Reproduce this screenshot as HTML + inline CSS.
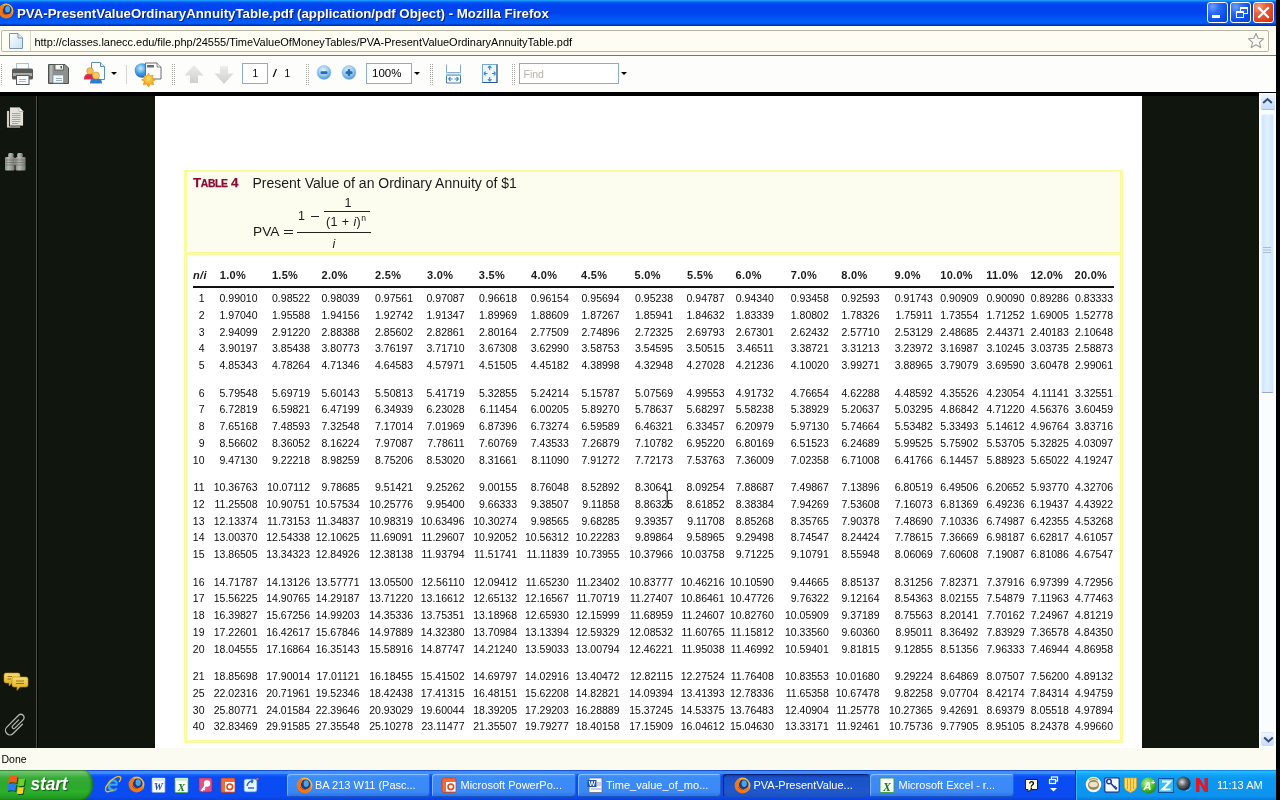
<!DOCTYPE html>
<html><head><meta charset="utf-8">
<style>
*{box-sizing:border-box}
html,body{margin:0;padding:0}
body{width:1280px;height:800px;position:relative;overflow:hidden;background:#10150d;font-family:"Liberation Sans",sans-serif}
.a{position:absolute}
#titlebar{left:0;top:0;width:1280px;height:26px;background:linear-gradient(#22a4fa 0px,#1888f8 1px,#0056f0 2.5px,#0044f0 5px,#0042ee 13px,#0052f4 17px,#005ef8 23px,#0050e8 24px,#0030b0 25px,#0030b0 26px)}
#title{left:17px;top:5.5px;font-size:13.25px;font-weight:bold;color:#fff;white-space:nowrap;text-shadow:1px 1px 0 #0a1e70;line-height:16px}
#addr{left:0;top:26px;width:1280px;height:30px;background:#fdfcf1;border-bottom:1px solid #77756a}
#field{left:1px;top:30px;width:1268px;height:22px;border:1px solid #b9b6a6;border-radius:2px;background:#fefdf4}
#url{left:34.5px;top:35px;font-size:11px;letter-spacing:-0.025px;color:#000;white-space:nowrap;line-height:14px}
#toolbar{left:0;top:56px;width:1280px;height:36px;background:#fdfdfb}
#blk{left:0;top:92px;width:1280px;height:4px;background:#000}
#side-line{left:36px;top:96px;width:1px;height:652px;background:#484c42;box-shadow:1px 0 0 #000}
#page{left:155px;top:96px;width:987px;height:652px;background:#fff}
#rborder{left:1276px;top:0;width:4px;height:800px;background:#000;z-index:5}
#sbar{left:1259px;top:93px;width:17px;height:655px;background:#fbfcfe}
#status{left:0;top:748px;width:1276px;height:22px;background:#fcfbf1}
#done{left:1.5px;top:753px;font-size:10.5px;color:#000;line-height:13px}
#taskbar{left:0;top:769px;width:1280px;height:31px;background:linear-gradient(#3168d5 0px,#4993e6 1px,#2157d7 3px,#2663e0 6px,#2663e0 26px,#1941a5 31px)}
#tbox{left:184px;top:170px;width:939px;height:573px;border:3px solid #f9fb9e;border-top-width:2px;background:#fff}
#thead{left:187px;top:172px;width:933px;height:83px;background:#fdfdef;border-bottom:3px solid #f9fb9e}
.c{position:absolute;width:100px;text-align:right;font-weight:normal;font-size:10.5px;line-height:10px;color:#0a0a0a;white-space:nowrap}
.h{position:absolute;top:270px;font-weight:bold;font-size:11px;letter-spacing:0.3px;line-height:10px;color:#1a1a1a;white-space:nowrap}
.winbtn{position:absolute;width:21px;height:21px;border:1px solid #fff;border-radius:3px;background:radial-gradient(circle at 25% 20%,#6fa0ff 0,#2d6cf8 30%,#0a4ee8 70%,#0840c8 100%)}
.winbtn.close{background:radial-gradient(circle at 25% 20%,#f0a080 0,#e8603a 35%,#d8401a 75%,#c03010 100%)}
.grip{position:absolute;width:4px;background-image:radial-gradient(circle,#a4a4a0 0.7px,transparent 0.9px);background-size:2px 2px}
.grip1{position:absolute;width:2px;background-image:radial-gradient(circle,#a4a4a0 0.7px,transparent 0.9px);background-size:2px 2px}
.tri{position:absolute;width:0;height:0;border-left:3px solid transparent;border-right:3px solid transparent;border-top:3px solid #000}
.tbtxt{position:absolute;font-size:11px;line-height:12px;color:#000;white-space:nowrap}
.task{position:absolute;top:774px;height:22.5px;border-radius:3px;background:linear-gradient(#48a0ff 0px,#3c8cf8 3px,#3a88f6 18px,#2a74ea 22px);box-shadow:inset 1px 1px 0 rgba(255,255,255,0.35),inset -1px -1px 0 rgba(0,30,120,0.35)}
.task.active{background:linear-gradient(#0a3cb0,#1a52c8 4px,#1e58cc 18px,#1a50c0);box-shadow:inset 1px 1px 1px rgba(0,0,60,0.6)}
.ttxt{position:absolute;top:779px;font-size:11px;line-height:12px;color:#fff;white-space:nowrap}
#rule{left:193px;top:286px;width:921px;height:1.5px;background:#111}
</style></head><body><div id="root" style="position:absolute;left:0;top:0;width:1280px;height:800px;will-change:transform">
<div id="titlebar" class="a"></div>
<div id="title" class="a">PVA-PresentValueOrdinaryAnnuityTable.pdf (application/pdf Object) - Mozilla Firefox</div>
<div id="addr" class="a"></div>
<div id="field" class="a"></div>
<div id="url" class="a">http://classes.lanecc.edu/file.php/24555/TimeValueOfMoneyTables/PVA-PresentValueOrdinaryAnnuityTable.pdf</div>
<div id="toolbar" class="a"></div>
<div id="blk" class="a"></div>
<div id="side-line" class="a"></div>
<div id="page" class="a"></div>
<div id="sbar" class="a"></div>
<div id="rborder" class="a"></div>
<div id="status" class="a"></div>
<div id="done" class="a">Done</div>

<!-- title bar icons -->
<svg class="a" style="left:-2.5px;top:2.5px" width="16" height="16" viewBox="0 0 17 17"><defs><radialGradient id="fo-2" cx="0.25" cy="0.75" r="0.9"><stop offset="0" stop-color="#d84010"/><stop offset="0.55" stop-color="#f4861a"/><stop offset="1" stop-color="#ffd040"/></radialGradient></defs><circle cx="8.5" cy="8.5" r="7.9" fill="url(#fo-2)"/><circle cx="9.6" cy="7.4" r="4.9" fill="#1c3c88"/><ellipse cx="10.2" cy="6.6" rx="2.6" ry="3.4" fill="#4aa4e8"/><path d="M1.2 7 Q2 2.5 6 1.5 Q5 3.5 6.3 5 Q4.2 6.5 5.2 9.5 Q6.5 12.5 10.5 12.3 Q13.5 12 15.6 9.5 Q15 14 10.5 15.6 Q6 16.6 3 13.8 Q0.8 11 1.2 7Z" fill="#f07818"/><path d="M4 10 Q6 13 10 12.6" stroke="#a83808" stroke-width="0.7" fill="none"/></svg>
<div class="a winbtn" style="left:1207px;top:2px"><div style="position:absolute;left:4px;top:12px;width:8px;height:3px;background:#fff"></div></div>
<div class="a winbtn" style="left:1230px;top:2px">
  <div style="position:absolute;left:9px;top:4px;width:8px;height:7px;border:1px solid #fff;border-top-width:2px"></div>
  <div style="position:absolute;left:5px;top:8px;width:8px;height:7px;border:1px solid #fff;border-top-width:2px;background:#1a5cf0"></div>
</div>
<div class="a winbtn close" style="left:1253px;top:2px">
  <svg width="19" height="19" style="position:absolute;left:0;top:0"><path d="M5 5 L14 14 M14 5 L5 14" stroke="#fff" stroke-width="2.2" stroke-linecap="square"/></svg>
</div>
<!-- address bar -->
<svg class="a" style="left:9px;top:33px" width="14" height="16" viewBox="0 0 14 16">
  <defs><linearGradient id="pgg" x1="0" y1="0" x2="1" y2="1"><stop offset="0" stop-color="#ffffff"/><stop offset="1" stop-color="#c6e2f6"/></linearGradient></defs>
  <path d="M0.5 0.5 H9 L13.5 5 V15.5 H0.5Z" fill="url(#pgg)" stroke="#7b94b8"/>
  <path d="M9 0.5 V5 H13.5" fill="#dde8f4" stroke="#7b94b8"/>
</svg>
<div class="a" style="left:30px;top:31px;width:1px;height:20px;background:#d8d4c4"></div>
<svg class="a" style="left:1247px;top:32px" width="18" height="18" viewBox="0 0 18 18">
  <path d="M9 1.5 L11.2 6.3 L16.5 6.8 L12.5 10.3 L13.7 15.6 L9 12.8 L4.3 15.6 L5.5 10.3 L1.5 6.8 L6.8 6.3Z" fill="#fbfbf7" stroke="#9c9a92" stroke-width="1.1" stroke-linejoin="round"/>
</svg>
<!-- toolbar -->
<svg class="a" style="left:1px;top:64px" width="2" height="22" fill="#a8a8a4"><rect x="0" y="0" width="1" height="1"/><rect x="0" y="2" width="1" height="1"/><rect x="0" y="4" width="1" height="1"/><rect x="0" y="6" width="1" height="1"/><rect x="0" y="8" width="1" height="1"/><rect x="0" y="10" width="1" height="1"/><rect x="0" y="12" width="1" height="1"/><rect x="0" y="14" width="1" height="1"/><rect x="0" y="16" width="1" height="1"/><rect x="0" y="18" width="1" height="1"/><rect x="0" y="20" width="1" height="1"/></svg>
<svg class="a" style="left:11px;top:62px" width="23" height="24" viewBox="0 0 23 24">
  <rect x="5.5" y="1.5" width="12" height="7" fill="#fbfdff" stroke="#a8c4d8"/>
  <rect x="1" y="6.5" width="21" height="11" rx="1.5" fill="#5a5c5a"/>
  <rect x="2" y="11" width="19" height="3" fill="#a9aba8"/>
  <rect x="5.5" y="13.5" width="12.5" height="9" fill="#fdfeff" stroke="#555a5e"/>
  <path d="M8 17.5 H15 M8 19.5 H15" stroke="#8aa0c0" stroke-width="0.8"/>
</svg>
<svg class="a" style="left:47px;top:63px" width="23" height="22" viewBox="0 0 23 22">
  <path d="M1.5 1.5 H18 L21.5 5 V20.5 H1.5Z" fill="#8e908c" stroke="#4e504e"/>
  <rect x="3" y="2" width="2.5" height="17" fill="#b4b6b2"/>
  <rect x="8" y="1.5" width="8.5" height="5.5" fill="#f4f4f2" stroke="#4e504e" stroke-width="0.8"/>
  <rect x="13.5" y="3" width="1.5" height="2.5" fill="#555"/>
  <rect x="6" y="12" width="10.5" height="8" fill="#f2f8fc" stroke="#7090b0" stroke-width="0.7"/>
  <path d="M9 15.5 H15 M9 17.5 H15" stroke="#7a8fa8" stroke-width="0.7"/>
</svg>
<svg class="a" style="left:83px;top:62px" width="24" height="23" viewBox="0 0 24 23">
  <path d="M8.5 0.5 H17.5 L21.5 4.5 V17.5 H8.5Z" fill="#ffffff" stroke="#5a8cc0"/>
  <path d="M17.5 0.5 V4.5 H21.5" fill="#e4eef8" stroke="#5a8cc0"/>
  <path d="M1 17.5 Q1 12 5 12 H8 Q11 12 11 17.5Z" fill="#d82850"/>
  <circle cx="7" cy="9" r="3.3" fill="#f2c050" stroke="#c88a30" stroke-width="0.6"/>
  <path d="M7 21.5 Q7 16.5 11 16.5 H15 Q19 16.5 19 21.5Z" fill="#2b7ed0"/>
  <circle cx="13" cy="13.5" r="3.5" fill="#f6cc60" stroke="#c88a30" stroke-width="0.6"/>
</svg>
<div class="a tri" style="left:110.5px;top:72px"></div>
<div class="a" style="left:126px;top:65px;width:1px;height:19px;background:#d4d4d0"></div>
<svg class="a" style="left:134px;top:62px" width="28" height="25" viewBox="0 0 28 25">
  <defs><radialGradient id="glb" cx="0.4" cy="0.35" r="0.7"><stop offset="0" stop-color="#c8ecff"/><stop offset="0.5" stop-color="#4aa0e8"/><stop offset="1" stop-color="#1a58b0"/></radialGradient>
  <radialGradient id="sun" cx="0.5" cy="0.4" r="0.6"><stop offset="0" stop-color="#ffe060"/><stop offset="1" stop-color="#f09000"/></radialGradient></defs>
  <circle cx="8" cy="8.5" r="7.3" fill="url(#glb)"/>
  <path d="M11.5 1 H23 L27 5 V17 H11.5Z" fill="#fff" stroke="#6a6c6a"/>
  <path d="M23 1 V5 H27" fill="#eee" stroke="#6a6c6a" stroke-width="0.8"/>
  <rect x="13" y="3" width="7" height="2.5" fill="#6a6c6a"/>
  <path d="M14.5 11 L16 14 L19.2 13 L18.5 16.4 L21.5 17.8 L18.8 19.6 L19.7 22.8 L16.4 22.1 L14.5 25 L12.6 22.1 L9.3 22.8 L10.2 19.6 L7.5 17.8 L10.5 16.4 L9.8 13 L13 14Z" fill="url(#sun)" stroke="#d07000" stroke-width="0.4"/>
</svg>
<svg class="a" style="left:172px;top:64px" width="4" height="22" fill="#a8a8a4"><rect x="0" y="0" width="1" height="1"/><rect x="0" y="2" width="1" height="1"/><rect x="0" y="4" width="1" height="1"/><rect x="0" y="6" width="1" height="1"/><rect x="0" y="8" width="1" height="1"/><rect x="0" y="10" width="1" height="1"/><rect x="0" y="12" width="1" height="1"/><rect x="0" y="14" width="1" height="1"/><rect x="0" y="16" width="1" height="1"/><rect x="0" y="18" width="1" height="1"/><rect x="0" y="20" width="1" height="1"/><rect x="2" y="0" width="1" height="1"/><rect x="2" y="2" width="1" height="1"/><rect x="2" y="4" width="1" height="1"/><rect x="2" y="6" width="1" height="1"/><rect x="2" y="8" width="1" height="1"/><rect x="2" y="10" width="1" height="1"/><rect x="2" y="12" width="1" height="1"/><rect x="2" y="14" width="1" height="1"/><rect x="2" y="16" width="1" height="1"/><rect x="2" y="18" width="1" height="1"/><rect x="2" y="20" width="1" height="1"/></svg>
<svg class="a" style="left:183px;top:64px" width="22" height="20" viewBox="0 0 22 20">
  <defs><linearGradient id="arg" x1="0" y1="0" x2="0" y2="1"><stop offset="0" stop-color="#ececea"/><stop offset="1" stop-color="#cfcfcb"/></linearGradient></defs>
  <path d="M11 1 L20.5 11.5 H15 V19 H7 V11.5 H1.5Z" fill="url(#arg)"/>
</svg>
<svg class="a" style="left:213px;top:65px" width="22" height="20" viewBox="0 0 22 20">
  <path d="M7 1 H15 V8.5 H20.5 L11 19 L1.5 8.5 H7Z" fill="url(#arg)"/>
</svg>
<div class="a" style="left:242px;top:63px;width:26px;height:21px;border:1px solid #8eacc4;background:#fff"></div>
<div class="a tbtxt" style="left:252.5px;top:67.5px;font-size:10px">1</div>
<div class="a tbtxt" style="left:273px;top:67px;font-size:11px;font-style:italic;font-weight:bold">/</div>
<div class="a tbtxt" style="left:284.5px;top:67.5px;font-size:10px">1</div>
<svg class="a" style="left:306px;top:64px" width="4" height="22" fill="#a8a8a4"><rect x="0" y="0" width="1" height="1"/><rect x="0" y="2" width="1" height="1"/><rect x="0" y="4" width="1" height="1"/><rect x="0" y="6" width="1" height="1"/><rect x="0" y="8" width="1" height="1"/><rect x="0" y="10" width="1" height="1"/><rect x="0" y="12" width="1" height="1"/><rect x="0" y="14" width="1" height="1"/><rect x="0" y="16" width="1" height="1"/><rect x="0" y="18" width="1" height="1"/><rect x="0" y="20" width="1" height="1"/><rect x="2" y="0" width="1" height="1"/><rect x="2" y="2" width="1" height="1"/><rect x="2" y="4" width="1" height="1"/><rect x="2" y="6" width="1" height="1"/><rect x="2" y="8" width="1" height="1"/><rect x="2" y="10" width="1" height="1"/><rect x="2" y="12" width="1" height="1"/><rect x="2" y="14" width="1" height="1"/><rect x="2" y="16" width="1" height="1"/><rect x="2" y="18" width="1" height="1"/><rect x="2" y="20" width="1" height="1"/></svg>
<svg class="a" style="left:316px;top:65px" width="16" height="16" viewBox="0 0 16 16">
  <defs><radialGradient id="zg" cx="0.45" cy="0.35" r="0.65"><stop offset="0" stop-color="#e8f6ff"/><stop offset="0.6" stop-color="#8cc8f0"/><stop offset="1" stop-color="#4a90d0"/></radialGradient></defs>
  <circle cx="8" cy="7.5" r="7" fill="url(#zg)" stroke="#a0c8e8" stroke-width="0.6"/>
  <rect x="4.5" y="6.3" width="7" height="2.6" rx="1" fill="#2a6ab0"/>
</svg>
<svg class="a" style="left:341px;top:65px" width="16" height="16" viewBox="0 0 16 16">
  <circle cx="8" cy="7.5" r="7" fill="url(#zg)" stroke="#a0c8e8" stroke-width="0.6"/>
  <rect x="4.5" y="6.3" width="7" height="2.6" rx="1" fill="#2a6ab0"/>
  <rect x="6.7" y="4" width="2.6" height="7" rx="1" fill="#2a6ab0"/>
</svg>
<div class="a" style="left:366px;top:63px;width:46px;height:21px;border:1px solid #8eacc4;background:#fff"></div>
<div class="a tbtxt" style="left:372px;top:67px;font-size:11.5px">100%</div>
<div class="a tri" style="left:413.5px;top:72px"></div>
<svg class="a" style="left:430px;top:64px" width="4" height="22" fill="#a8a8a4"><rect x="0" y="0" width="1" height="1"/><rect x="0" y="2" width="1" height="1"/><rect x="0" y="4" width="1" height="1"/><rect x="0" y="6" width="1" height="1"/><rect x="0" y="8" width="1" height="1"/><rect x="0" y="10" width="1" height="1"/><rect x="0" y="12" width="1" height="1"/><rect x="0" y="14" width="1" height="1"/><rect x="0" y="16" width="1" height="1"/><rect x="0" y="18" width="1" height="1"/><rect x="0" y="20" width="1" height="1"/><rect x="2" y="0" width="1" height="1"/><rect x="2" y="2" width="1" height="1"/><rect x="2" y="4" width="1" height="1"/><rect x="2" y="6" width="1" height="1"/><rect x="2" y="8" width="1" height="1"/><rect x="2" y="10" width="1" height="1"/><rect x="2" y="12" width="1" height="1"/><rect x="2" y="14" width="1" height="1"/><rect x="2" y="16" width="1" height="1"/><rect x="2" y="18" width="1" height="1"/><rect x="2" y="20" width="1" height="1"/></svg>
<svg class="a" style="left:444px;top:63px" width="19" height="22" viewBox="0 0 19 22">
  <path d="M2.5 1.5 V9.5 H16.5 V1.5" fill="#fff" stroke="#7aa2c8" stroke-width="0.9"/>
  <path d="M2 11.2 H17" stroke="#8ab8e0" stroke-width="1"/>
  <path d="M2.5 12.5 V20 H16.5 V12.5" fill="#fff" stroke="#3a6a98" stroke-width="0.9"/>
  <path d="M2.5 12.3 H16.5" stroke="#5a8ab8" stroke-width="0.8"/>
  <path d="M4.5 16 H8.5 M4.5 16 L6.5 14 M4.5 16 L6.5 18 M10.5 16 H14.5 M14.5 16 L12.5 14 M14.5 16 L12.5 18" stroke="#3a88d0" stroke-width="1.1" fill="none"/>
</svg>
<svg class="a" style="left:481px;top:63px" width="18" height="21" viewBox="0 0 18 21">
  <rect x="1.5" y="1.5" width="14.5" height="18" fill="#eef6fc" stroke="#6aa0d0" stroke-width="0.9"/>
  <path d="M16 1.5 V19.5 H1.5" stroke="#2a5a88" stroke-width="1.1" fill="none"/>
  <path d="M8.7 3 V7 M8.7 3 L6.9 4.8 M8.7 3 L10.5 4.8 M8.7 18 V14 M8.7 18 L6.9 16.2 M8.7 18 L10.5 16.2 M2.8 10.5 H6.5 M2.8 10.5 L4.6 8.7 M2.8 10.5 L4.6 12.3 M14.6 10.5 H11 M14.6 10.5 L12.8 8.7 M14.6 10.5 L12.8 12.3" stroke="#3a88d0" stroke-width="1.1" fill="none"/>
</svg>
<svg class="a" style="left:512px;top:64px" width="4" height="22" fill="#a8a8a4"><rect x="0" y="0" width="1" height="1"/><rect x="0" y="2" width="1" height="1"/><rect x="0" y="4" width="1" height="1"/><rect x="0" y="6" width="1" height="1"/><rect x="0" y="8" width="1" height="1"/><rect x="0" y="10" width="1" height="1"/><rect x="0" y="12" width="1" height="1"/><rect x="0" y="14" width="1" height="1"/><rect x="0" y="16" width="1" height="1"/><rect x="0" y="18" width="1" height="1"/><rect x="0" y="20" width="1" height="1"/><rect x="2" y="0" width="1" height="1"/><rect x="2" y="2" width="1" height="1"/><rect x="2" y="4" width="1" height="1"/><rect x="2" y="6" width="1" height="1"/><rect x="2" y="8" width="1" height="1"/><rect x="2" y="10" width="1" height="1"/><rect x="2" y="12" width="1" height="1"/><rect x="2" y="14" width="1" height="1"/><rect x="2" y="16" width="1" height="1"/><rect x="2" y="18" width="1" height="1"/><rect x="2" y="20" width="1" height="1"/></svg>
<div class="a" style="left:519px;top:63px;width:100px;height:21px;border:1px solid #8eacc4;background:#fff"></div>
<div class="a tbtxt" style="left:523.5px;top:68px;color:#b4b2a8;font-size:10.5px">Find</div>
<div class="a tri" style="left:621px;top:72px"></div>
<!-- sidebar icons -->
<svg class="a" style="left:5px;top:106px" width="20" height="23" viewBox="0 0 20 23">
  <rect x="1.5" y="4.5" width="14" height="17.5" fill="#cfcfc7" stroke="#0a0c08" stroke-width="0.8"/>
  <path d="M4.5 1 H14 L18.5 5.5 V20 H4.5Z" fill="#e2e2da" stroke="#0a0c08" stroke-width="0.8"/>
  <path d="M14 1 V5.5 H18.5Z" fill="#f6f6f0" stroke="#8a8a84" stroke-width="0.5"/>
  <path d="M7 7.5 H15.5 M7 9.5 H15.5 M7 11.5 H15.5 M7 13.5 H15.5 M7 15.5 H15.5 M7 17.5 H13" stroke="#96968e" stroke-width="0.8"/>
</svg>
<svg class="a" style="left:4px;top:152px" width="23" height="20" viewBox="0 0 23 20">
  <defs><linearGradient id="bin" x1="0" y1="0" x2="1" y2="0"><stop offset="0" stop-color="#8a8c84"/><stop offset="0.35" stop-color="#b8bab2"/><stop offset="1" stop-color="#76786f"/></linearGradient></defs>
  <rect x="4" y="1" width="5.6" height="4.5" rx="1.5" fill="url(#bin)"/>
  <rect x="13" y="1" width="5.8" height="4.5" rx="1.5" fill="url(#bin)"/>
  <rect x="1" y="5" width="9.6" height="13.6" rx="1" fill="url(#bin)"/>
  <rect x="11.6" y="5" width="10" height="13.6" rx="1" fill="url(#bin)"/>
  <rect x="10" y="6" width="2.5" height="7" fill="#8e9088"/>
  <path d="M1.5 8 H21 M1.5 10.5 H21 M1.5 13 H21" stroke="#5e6058" stroke-width="0.7" opacity="0.8"/>
</svg>
<svg class="a" style="left:3px;top:671px" width="26" height="21" viewBox="0 0 26 21">
  <defs><linearGradient id="cmt" x1="0" y1="0" x2="0" y2="1"><stop offset="0" stop-color="#f8e070"/><stop offset="1" stop-color="#d8a818"/></linearGradient></defs>
  <path d="M3 2 H15 Q17 2 17 4 V10 Q17 12 15 12 H9 L6 15 V12 H3 Q1 12 1 10 V4 Q1 2 3 2Z" fill="url(#cmt)" stroke="#b88a10" stroke-width="0.6"/>
  <path d="M11 6 H23 Q25 6 25 8 V14 Q25 16 23 16 H17 L14 19.5 V16 H11 Q9 16 9 14 V8 Q9 6 11 6Z" fill="url(#cmt)" stroke="#b88a10" stroke-width="0.6"/>
  <path d="M13 10 H21 M13 12.5 H21" stroke="#8a6a10" stroke-width="0.9"/>
  <path d="M4.5 5.5 H9 M4.5 8 H8" stroke="#8a6a10" stroke-width="0.9"/>
</svg>
<svg class="a" style="left:0px;top:708px" width="30" height="32" viewBox="0 0 30 32">
  <g transform="translate(16,16.3) rotate(45) translate(-4.5,-12)">
    <path d="M3.2 7 V15.5 A1.6 1.6 0 0 0 6.4 15.5 V3.8 A3.2 3.2 0 0 0 0 3.8 V20.5 A4.5 4.5 0 0 0 9 20.5 V7.5" stroke="#b4b6ae" stroke-width="1.3" fill="none" stroke-linecap="round"/>
  </g>
</svg>
<!-- scrollbar -->
<div class="a" style="left:1260.5px;top:94px;width:14px;height:15.5px;border-radius:2px;background:linear-gradient(#eef4fe,#d8e8fc 50%,#c4dcf8);border-bottom:1px solid #a8bee0"></div>
<svg class="a" style="left:1262px;top:97px" width="11" height="8" viewBox="0 0 11 8"><path d="M1.2 6 L5.5 2 L9.8 6" stroke="#344a80" stroke-width="2" fill="none"/></svg>
<div class="a" style="left:1261px;top:114px;width:13px;height:279px;border-radius:2px;background:linear-gradient(90deg,#cfe6fc,#e0f0fe 50%,#cfe6fc);border:1px solid #eaf2fc;border-bottom:1px solid #9aa8c8"></div>
<svg class="a" style="left:1263px;top:247px" width="8" height="7"><path d="M0 0.5 H8 M0 3 H8 M0 5.5 H8" stroke="#a8bcd8" stroke-width="1"/></svg>
<div class="a" style="left:1261px;top:732px;width:13px;height:14px;border-radius:2px;background:linear-gradient(#eef4fe,#d8e8fc 50%,#c4dcf8);border-top:1px solid #dde6f2"></div>
<svg class="a" style="left:1262.5px;top:736px" width="11" height="8" viewBox="0 0 11 8"><path d="M1.2 1.5 L5.5 5.5 L9.8 1.5" stroke="#344a80" stroke-width="2" fill="none"/></svg>
<!-- I-beam cursor -->
<svg class="a" style="left:662px;top:488px;z-index:6" width="10" height="22" viewBox="0 0 10 22">
  <path d="M2.5 1.5 Q5 2 5.2 4 V17 Q5 19.5 2.5 20 M8 1.5 Q5.5 2 5.2 4 M5.2 17 Q5.5 19.5 8 20" stroke="#111" stroke-width="1" fill="none"/>
</svg>

<!-- taskbar -->
<div class="a" style="left:0;top:770px;width:1280px;height:30px;background:linear-gradient(#1a50d0 0px,#1a50d0 1px,#3a90ff 1px,#3a8cff 3.5px,#1a64f8 4.5px,#0a4cf4 7px,#0a4cf2 26px,#0a42d8 30px)"></div>
<!-- start button -->
<div class="a" style="left:0;top:770px;width:93px;height:30px;border-radius:0 9px 11px 0/0 14px 15px 0;background:linear-gradient(#247a24 0px,#72c872 1.5px,#5cbc5c 4px,#36ac36 8px,#2ea82e 16px,#2cb02c 22px,#1e901e 30px);box-shadow:inset -2px 0 2px rgba(0,40,0,0.35)"></div>
<svg class="a" style="left:6px;top:775px;filter:drop-shadow(1px 1px 0.6px rgba(0,40,0,0.7))" width="21" height="20" viewBox="0 0 21 20">
  <path d="M3.2 1.5 Q6.5 0 11.5 1.5 L10.5 8 Q6 6.5 2.2 8Z" fill="#f05a1a"/>
  <path d="M13 3.5 Q15.5 4.5 19 3.5 L18 10.5 Q15 11.5 12 10.5Z" fill="#6ad02a"/>
  <path d="M2 9.5 Q5.5 8 10.3 9.5 L9.3 16 Q5 14.5 1 16Z" fill="#2a7cf0"/>
  <path d="M11.8 12 Q14.8 13 17.8 12 L16.8 18.5 Q13.5 19.5 10.8 18.5Z" fill="#f8d020"/>
</svg>
<div class="a" style="left:30.5px;top:775px;font-weight:bold;font-style:italic;font-size:17.5px;letter-spacing:-0.2px;line-height:19px;color:#fff;text-shadow:1px 1px 1px #185818">start</div>
<!-- quick launch -->
<svg class="a" style="left:104px;top:776px" width="18" height="17" viewBox="0 0 18 17">
  <path d="M4 8.5 A5 5 0 1 1 13.5 10 H6.5 A3 3 0 0 0 12 11.5 L13.5 12.8 A5 5 0 0 1 4 8.5Z M6.6 7.5 H11.5 A2.6 2.6 0 0 0 6.6 7.5Z" fill="#3aa8f0" stroke="#1a5ab0" stroke-width="0.5"/>
  <path d="M2 15 Q0 12 6 5.5 Q13 -1 16.5 1.2 Q17.5 2.5 15 6 M2 15 Q4 16.8 9 14" stroke="#f0b828" stroke-width="1.4" fill="none"/>
</svg>
<svg class="a" style="left:127.5px;top:776px" width="17" height="17" viewBox="0 0 17 17"><defs><radialGradient id="fo127" cx="0.25" cy="0.75" r="0.9"><stop offset="0" stop-color="#d84010"/><stop offset="0.55" stop-color="#f4861a"/><stop offset="1" stop-color="#ffd040"/></radialGradient></defs><circle cx="8.5" cy="8.5" r="7.9" fill="url(#fo127)"/><circle cx="9.6" cy="7.4" r="4.9" fill="#1c3c88"/><ellipse cx="10.2" cy="6.6" rx="2.6" ry="3.4" fill="#4aa4e8"/><path d="M1.2 7 Q2 2.5 6 1.5 Q5 3.5 6.3 5 Q4.2 6.5 5.2 9.5 Q6.5 12.5 10.5 12.3 Q13.5 12 15.6 9.5 Q15 14 10.5 15.6 Q6 16.6 3 13.8 Q0.8 11 1.2 7Z" fill="#f07818"/><path d="M4 10 Q6 13 10 12.6" stroke="#a83808" stroke-width="0.7" fill="none"/></svg>
<svg class="a" style="left:151px;top:777px" width="15" height="16" viewBox="0 0 15 16">
  <rect x="1" y="1" width="13" height="14.5" rx="1" fill="#fafcff" stroke="#7aa0d8" stroke-width="0.8"/>
  <rect x="1" y="1" width="13" height="3" fill="#dde8fa"/>
  <text x="7.5" y="13" font-family="Liberation Serif" font-weight="bold" font-style="italic" font-size="10" fill="#1f4fa8" text-anchor="middle">W</text>
</svg>
<svg class="a" style="left:174px;top:777px" width="15" height="16" viewBox="0 0 15 16">
  <rect x="1" y="1" width="13" height="14.5" rx="1" fill="#f8fff6" stroke="#5aa85a" stroke-width="0.8"/>
  <rect x="1" y="1" width="13" height="3" fill="#cfeccf"/>
  <text x="7.5" y="13.5" font-family="Liberation Serif" font-weight="bold" font-style="italic" font-size="11" fill="#1e7a1e" text-anchor="middle">X</text>
</svg>
<svg class="a" style="left:197px;top:777px" width="16" height="16" viewBox="0 0 16 16">
  <path d="M2 1 H13 Q15 1 15 3 V13 Q15 15 13 15 H4 Q2 15 2 13Z" fill="#e05080" stroke="#b02050" stroke-width="0.6"/>
  <circle cx="10" cy="6.5" r="3.2" fill="#fff"/>
  <path d="M8.5 8.5 L4.5 14 M6 11.5 L8 12.5" stroke="#fff" stroke-width="2"/>
</svg>
<svg class="a" style="left:220px;top:777px" width="16" height="16" viewBox="0 0 16 16">
  <rect x="1" y="1" width="14" height="14.5" rx="1.5" fill="#f06a3a" stroke="#c03818" stroke-width="0.6"/>
  <rect x="5" y="5" width="9.5" height="9.5" fill="#fff"/>
  <circle cx="9.8" cy="9.8" r="2.8" fill="none" stroke="#e04818" stroke-width="1.6"/>
</svg>
<svg class="a" style="left:243px;top:777px" width="16" height="16" viewBox="0 0 16 16">
  <path d="M3 2 H12 Q14 2 14 4 V13 Q14 15 12 15 H3 Q1 15 1 13 V4 Q1 2 3 2Z" fill="#e8f4ff" stroke="#3a7ad0" stroke-width="0.8"/>
  <path d="M4 9 Q5 4 10 4 M10 4 L8.5 2.5 M10 4 L8.5 6 M5 11 H11" stroke="#2a6ac8" stroke-width="1.5" fill="none"/>
  <path d="M12.5 3 L15.5 1.5" stroke="#f06a3a" stroke-width="1.5"/>
</svg>
<!-- task buttons -->
<div class="a task" style="left:286.5px;width:143px"></div>
<div class="a task" style="left:431.5px;width:144.5px"></div>
<div class="a task" style="left:577.5px;width:143.5px"></div>
<div class="a task active" style="left:723px;width:145.5px"></div>
<div class="a task" style="left:870px;width:144px"></div>
<div class="a ttxt" style="left:315px">BA 213 W11 (Pasc...</div>
<div class="a ttxt" style="left:460.5px">Microsoft PowerPo...</div>
<div class="a ttxt" style="left:606px">Time_value_of_mo...</div>
<div class="a ttxt" style="left:753.5px">PVA-PresentValue...</div>
<div class="a ttxt" style="left:898.5px">Microsoft Excel - r...</div>
<svg class="a" style="left:295.5px;top:776.5px" width="17" height="17" viewBox="0 0 17 17"><defs><radialGradient id="fo295" cx="0.25" cy="0.75" r="0.9"><stop offset="0" stop-color="#d84010"/><stop offset="0.55" stop-color="#f4861a"/><stop offset="1" stop-color="#ffd040"/></radialGradient></defs><circle cx="8.5" cy="8.5" r="7.9" fill="url(#fo295)"/><circle cx="9.6" cy="7.4" r="4.9" fill="#1c3c88"/><ellipse cx="10.2" cy="6.6" rx="2.6" ry="3.4" fill="#4aa4e8"/><path d="M1.2 7 Q2 2.5 6 1.5 Q5 3.5 6.3 5 Q4.2 6.5 5.2 9.5 Q6.5 12.5 10.5 12.3 Q13.5 12 15.6 9.5 Q15 14 10.5 15.6 Q6 16.6 3 13.8 Q0.8 11 1.2 7Z" fill="#f07818"/><path d="M4 10 Q6 13 10 12.6" stroke="#a83808" stroke-width="0.7" fill="none"/></svg><svg class="a" style="left:733.5px;top:776.5px" width="17" height="17" viewBox="0 0 17 17"><defs><radialGradient id="fo733" cx="0.25" cy="0.75" r="0.9"><stop offset="0" stop-color="#d84010"/><stop offset="0.55" stop-color="#f4861a"/><stop offset="1" stop-color="#ffd040"/></radialGradient></defs><circle cx="8.5" cy="8.5" r="7.9" fill="url(#fo733)"/><circle cx="9.6" cy="7.4" r="4.9" fill="#1c3c88"/><ellipse cx="10.2" cy="6.6" rx="2.6" ry="3.4" fill="#4aa4e8"/><path d="M1.2 7 Q2 2.5 6 1.5 Q5 3.5 6.3 5 Q4.2 6.5 5.2 9.5 Q6.5 12.5 10.5 12.3 Q13.5 12 15.6 9.5 Q15 14 10.5 15.6 Q6 16.6 3 13.8 Q0.8 11 1.2 7Z" fill="#f07818"/><path d="M4 10 Q6 13 10 12.6" stroke="#a83808" stroke-width="0.7" fill="none"/></svg>
<svg class="a" style="left:441px;top:777px" width="16" height="16" viewBox="0 0 16 16"><rect x="1" y="1" width="14" height="14.5" rx="1.5" fill="#f06a3a" stroke="#c03818" stroke-width="0.6"/><rect x="5" y="5" width="9.5" height="9.5" fill="#fff"/><circle cx="9.8" cy="9.8" r="2.8" fill="none" stroke="#e04818" stroke-width="1.6"/></svg>
<svg class="a" style="left:587px;top:777px" width="16" height="16" viewBox="0 0 16 16"><rect x="2" y="1" width="13" height="14.5" fill="#fafcff" stroke="#5a6a88" stroke-width="0.8"/><rect x="0.5" y="3" width="9" height="7" fill="#1f4fa8"/><text x="5" y="9" font-family="Liberation Sans" font-weight="bold" font-size="7" fill="#fff" text-anchor="middle">W</text><path d="M10 6 H14 M10 8 H14 M4 12 H14" stroke="#7a8ab0" stroke-width="0.8"/></svg>
<svg class="a" style="left:879px;top:777px" width="16" height="16" viewBox="0 0 16 16"><rect x="1" y="1" width="14" height="14.5" rx="1" fill="#f8fff6" stroke="#3a9a3a" stroke-width="0.9"/><text x="8" y="13.5" font-family="Liberation Serif" font-weight="bold" font-style="italic" font-size="12" fill="#1e7a1e" text-anchor="middle">X</text></svg>

<!-- help & restore -->
<svg class="a" style="left:1024px;top:778px" width="15" height="15" viewBox="0 0 15 15">
  <path d="M1.5 1.5 H13.5 V11.5 H7 L4 14 V11.5 H1.5Z" fill="#fffbe0" stroke="#1a1a1a" stroke-width="1"/>
  <text x="7.5" y="10.5" font-family="Liberation Sans" font-weight="bold" font-size="10" fill="#000" text-anchor="middle">?</text>
</svg>
<svg class="a" style="left:1048px;top:776px" width="12" height="17" viewBox="0 0 12 17">
  <rect x="3.5" y="1" width="6" height="4" fill="none" stroke="#fff" stroke-width="1.2"/>
  <rect x="1.5" y="3.5" width="6" height="4" fill="#1464f0" stroke="#fff" stroke-width="1.2"/>
  <path d="M2 12 H9 L5.5 15.5Z" fill="#fff"/>
</svg>
<!-- tray -->
<div class="a" style="left:1075px;top:770px;width:205px;height:30px;background:linear-gradient(#1070d8 0px,#20c0ff 1.5px,#14a8fa 4px,#0c98f0 8px,#0c94ee 26px,#0a78dc 30px);border-left:1px solid #08288a;box-shadow:inset 1px 0 0 #30c0ff"></div>
<svg class="a" style="left:1085px;top:776px" width="17" height="17" viewBox="0 0 17 17">
  <circle cx="8.5" cy="8.5" r="7.8" fill="#fbfaf0"/>
  <ellipse cx="8.5" cy="9" rx="5.5" ry="5" fill="#9a8a50"/>
  <ellipse cx="8.5" cy="8.5" rx="4.3" ry="2.8" fill="#e8e4d0"/>
  <path d="M4 4 Q8.5 1.5 13 4" stroke="#c8b060" stroke-width="1.5" fill="none"/>
</svg>
<svg class="a" style="left:1104px;top:777px" width="16" height="16" viewBox="0 0 16 16">
  <rect x="0.8" y="0.8" width="14.4" height="14.4" rx="1.5" fill="#f4f8ff" stroke="#12358a" stroke-width="1.2"/>
  <circle cx="5" cy="4.5" r="2.3" fill="none" stroke="#1a3f98" stroke-width="1.5"/>
  <path d="M6.5 6 L12.5 12.5 M10 10.5 L11.5 9 M11.5 12 L13 10.5" stroke="#1a3f98" stroke-width="1.6"/>
</svg>
<svg class="a" style="left:1123.5px;top:776.5px" width="13" height="16" viewBox="0 0 13 16">
  <path d="M0.5 1 H12.5 V10 Q12.5 13 6.5 15.5 Q0.5 13 0.5 10Z" fill="#f8e060" stroke="#d8a020" stroke-width="0.8"/>
  <path d="M3.5 1.5 V12 M6.5 1.5 V14 M9.5 1.5 V12" stroke="#e89828" stroke-width="1.1"/>
</svg>
<svg class="a" style="left:1139.5px;top:776.5px" width="17" height="17" viewBox="0 0 17 17">
  <defs><radialGradient id="ag" cx="0.4" cy="0.35" r="0.65"><stop offset="0" stop-color="#c8f8a0"/><stop offset="0.6" stop-color="#50c030"/><stop offset="1" stop-color="#2a8a18"/></radialGradient></defs>
  <circle cx="8.5" cy="8.5" r="8" fill="url(#ag)"/>
  <text x="7.5" y="12.5" font-family="Liberation Sans" font-weight="bold" font-style="italic" font-size="11" fill="#fff" text-anchor="middle">A</text>
  <text x="13" y="8" font-family="Liberation Sans" font-weight="bold" font-size="7" fill="#fff" text-anchor="middle">+</text>
</svg>
<svg class="a" style="left:1158px;top:777.5px" width="16" height="15" viewBox="0 0 16 15">
  <rect x="0.5" y="0.5" width="15" height="14" fill="#30c0f0" stroke="#10509a" stroke-width="1"/>
  <path d="M4 3.5 H12 L4.5 11.5 H12.5" stroke="#fff" stroke-width="2.2" fill="none"/>
</svg>
<svg class="a" style="left:1176px;top:776px" width="17" height="17" viewBox="0 0 17 17">
  <defs><radialGradient id="spk" cx="0.4" cy="0.4" r="0.6"><stop offset="0" stop-color="#e0e0e0"/><stop offset="0.5" stop-color="#606468"/><stop offset="1" stop-color="#202428"/></radialGradient></defs>
  <circle cx="7.5" cy="7.5" r="7" fill="url(#spk)"/>
  <path d="M10 15 Q13 14.5 15.5 12" stroke="#7ab0e8" stroke-width="0.8" fill="none"/>
</svg>
<svg class="a" style="left:1195px;top:777px" width="14" height="16" viewBox="0 0 14 16">
  <path d="M1 15 V1 H4.5 L9.5 9.5 V1 H13 V15 H9.5 L4.5 6.5 V15Z" fill="#e01828"/>
</svg>
<div class="a" style="left:1217px;top:779px;font-size:11px;line-height:12px;color:#fff;white-space:nowrap">11:13 AM</div>

<div id="tbox" class="a"></div>
<div id="thead" class="a"></div>
<div id="rule" class="a"></div>
<div class="a" id="tlabel" style="left:193px;top:176px;font-weight:bold;font-size:13.3px;line-height:14px;color:#8c0a36;white-space:nowrap;letter-spacing:-0.3px;-webkit-text-stroke:0.25px #8c0a36">T<span style="font-size:10.4px;letter-spacing:-0.4px">ABLE</span> 4</div>
<div class="a" id="ttl" style="left:252.5px;top:176px;font-size:14px;line-height:14px;color:#1a1a1a;white-space:nowrap">Present Value of an Ordinary Annuity of $1</div>
<div class="a" id="pva" style="left:253px;top:225px;font-size:13.7px;line-height:14px;color:#1a1a1a;white-space:nowrap">PVA</div>
<div class="a" style="left:284px;top:229.5px;width:8.5px;height:1.2px;background:#222"></div>
<div class="a" style="left:284px;top:233.3px;width:8.5px;height:1.2px;background:#222"></div>
<div class="a" style="left:297px;top:232px;width:74px;height:1.3px;background:#222"></div>
<div class="a" style="left:323.5px;top:210.8px;width:46.5px;height:1.3px;background:#222"></div>
<div class="a" id="one1" style="left:298px;top:210px;font-size:12.5px;line-height:12px;color:#1a1a1a;white-space:nowrap">1</div>
<div class="a" style="left:311px;top:215.5px;width:8px;height:1.2px;background:#222"></div>
<div class="a" id="one2" style="left:344.5px;top:197px;font-size:12.5px;line-height:12px;color:#1a1a1a;white-space:nowrap">1</div>
<div class="a" id="onei" style="left:326px;top:215.5px;font-size:12.5px;line-height:12px;color:#1a1a1a;white-space:nowrap;letter-spacing:0.4px">(1 + <i>i</i>)<sup style="font-size:8.5px;vertical-align:0;position:relative;top:-4.5px;left:0px;letter-spacing:0">n</sup></div>
<div class="a" id="deni" style="left:332.5px;top:237.5px;font-size:12.5px;line-height:12px;color:#1a1a1a;white-space:nowrap"><i>i</i></div>
<b class="h" style="left:193px;font-style:italic">n/i</b>
<b class="h" style="left:219.75px">1.0%</b><b class="h" style="left:271.90px">1.5%</b><b class="h" style="left:321.50px">2.0%</b><b class="h" style="left:375.00px">2.5%</b><b class="h" style="left:427.00px">3.0%</b><b class="h" style="left:478.75px">3.5%</b><b class="h" style="left:531.00px">4.0%</b><b class="h" style="left:581.00px">4.5%</b><b class="h" style="left:634.50px">5.0%</b><b class="h" style="left:687.00px">5.5%</b><b class="h" style="left:735.50px">6.0%</b><b class="h" style="left:790.75px">7.0%</b><b class="h" style="left:841.25px">8.0%</b><b class="h" style="left:894.50px">9.0%</b><b class="h" style="left:940.25px">10.0%</b><b class="h" style="left:986.25px">11.0%</b><b class="h" style="left:1030.50px">12.0%</b><b class="h" style="left:1074.50px">20.0%</b>
<b class="c" style="top:293.00px;left:104.50px">1</b><b class="c" style="top:293.00px;left:157.50px">0.99010</b><b class="c" style="top:293.00px;left:210.00px">0.98522</b><b class="c" style="top:293.00px;left:259.50px">0.98039</b><b class="c" style="top:293.00px;left:313.00px">0.97561</b><b class="c" style="top:293.00px;left:364.50px">0.97087</b><b class="c" style="top:293.00px;left:417.00px">0.96618</b><b class="c" style="top:293.00px;left:468.75px">0.96154</b><b class="c" style="top:293.00px;left:519.50px">0.95694</b><b class="c" style="top:293.00px;left:573.00px">0.95238</b><b class="c" style="top:293.00px;left:624.50px">0.94787</b><b class="c" style="top:293.00px;left:673.75px">0.94340</b><b class="c" style="top:293.00px;left:728.75px">0.93458</b><b class="c" style="top:293.00px;left:779.50px">0.92593</b><b class="c" style="top:293.00px;left:832.75px">0.91743</b><b class="c" style="top:293.00px;left:878.25px">0.90909</b><b class="c" style="top:293.00px;left:924.50px">0.90090</b><b class="c" style="top:293.00px;left:968.75px">0.89286</b><b class="c" style="top:293.00px;left:1013.00px">0.83333</b><b class="c" style="top:309.80px;left:104.50px">2</b><b class="c" style="top:309.80px;left:157.50px">1.97040</b><b class="c" style="top:309.80px;left:210.00px">1.95588</b><b class="c" style="top:309.80px;left:259.50px">1.94156</b><b class="c" style="top:309.80px;left:313.00px">1.92742</b><b class="c" style="top:309.80px;left:364.50px">1.91347</b><b class="c" style="top:309.80px;left:417.00px">1.89969</b><b class="c" style="top:309.80px;left:468.75px">1.88609</b><b class="c" style="top:309.80px;left:519.50px">1.87267</b><b class="c" style="top:309.80px;left:573.00px">1.85941</b><b class="c" style="top:309.80px;left:624.50px">1.84632</b><b class="c" style="top:309.80px;left:673.75px">1.83339</b><b class="c" style="top:309.80px;left:728.75px">1.80802</b><b class="c" style="top:309.80px;left:779.50px">1.78326</b><b class="c" style="top:309.80px;left:832.75px">1.75911</b><b class="c" style="top:309.80px;left:878.25px">1.73554</b><b class="c" style="top:309.80px;left:924.50px">1.71252</b><b class="c" style="top:309.80px;left:968.75px">1.69005</b><b class="c" style="top:309.80px;left:1013.00px">1.52778</b><b class="c" style="top:326.60px;left:104.50px">3</b><b class="c" style="top:326.60px;left:157.50px">2.94099</b><b class="c" style="top:326.60px;left:210.00px">2.91220</b><b class="c" style="top:326.60px;left:259.50px">2.88388</b><b class="c" style="top:326.60px;left:313.00px">2.85602</b><b class="c" style="top:326.60px;left:364.50px">2.82861</b><b class="c" style="top:326.60px;left:417.00px">2.80164</b><b class="c" style="top:326.60px;left:468.75px">2.77509</b><b class="c" style="top:326.60px;left:519.50px">2.74896</b><b class="c" style="top:326.60px;left:573.00px">2.72325</b><b class="c" style="top:326.60px;left:624.50px">2.69793</b><b class="c" style="top:326.60px;left:673.75px">2.67301</b><b class="c" style="top:326.60px;left:728.75px">2.62432</b><b class="c" style="top:326.60px;left:779.50px">2.57710</b><b class="c" style="top:326.60px;left:832.75px">2.53129</b><b class="c" style="top:326.60px;left:878.25px">2.48685</b><b class="c" style="top:326.60px;left:924.50px">2.44371</b><b class="c" style="top:326.60px;left:968.75px">2.40183</b><b class="c" style="top:326.60px;left:1013.00px">2.10648</b><b class="c" style="top:343.40px;left:104.50px">4</b><b class="c" style="top:343.40px;left:157.50px">3.90197</b><b class="c" style="top:343.40px;left:210.00px">3.85438</b><b class="c" style="top:343.40px;left:259.50px">3.80773</b><b class="c" style="top:343.40px;left:313.00px">3.76197</b><b class="c" style="top:343.40px;left:364.50px">3.71710</b><b class="c" style="top:343.40px;left:417.00px">3.67308</b><b class="c" style="top:343.40px;left:468.75px">3.62990</b><b class="c" style="top:343.40px;left:519.50px">3.58753</b><b class="c" style="top:343.40px;left:573.00px">3.54595</b><b class="c" style="top:343.40px;left:624.50px">3.50515</b><b class="c" style="top:343.40px;left:673.75px">3.46511</b><b class="c" style="top:343.40px;left:728.75px">3.38721</b><b class="c" style="top:343.40px;left:779.50px">3.31213</b><b class="c" style="top:343.40px;left:832.75px">3.23972</b><b class="c" style="top:343.40px;left:878.25px">3.16987</b><b class="c" style="top:343.40px;left:924.50px">3.10245</b><b class="c" style="top:343.40px;left:968.75px">3.03735</b><b class="c" style="top:343.40px;left:1013.00px">2.58873</b><b class="c" style="top:360.20px;left:104.50px">5</b><b class="c" style="top:360.20px;left:157.50px">4.85343</b><b class="c" style="top:360.20px;left:210.00px">4.78264</b><b class="c" style="top:360.20px;left:259.50px">4.71346</b><b class="c" style="top:360.20px;left:313.00px">4.64583</b><b class="c" style="top:360.20px;left:364.50px">4.57971</b><b class="c" style="top:360.20px;left:417.00px">4.51505</b><b class="c" style="top:360.20px;left:468.75px">4.45182</b><b class="c" style="top:360.20px;left:519.50px">4.38998</b><b class="c" style="top:360.20px;left:573.00px">4.32948</b><b class="c" style="top:360.20px;left:624.50px">4.27028</b><b class="c" style="top:360.20px;left:673.75px">4.21236</b><b class="c" style="top:360.20px;left:728.75px">4.10020</b><b class="c" style="top:360.20px;left:779.50px">3.99271</b><b class="c" style="top:360.20px;left:832.75px">3.88965</b><b class="c" style="top:360.20px;left:878.25px">3.79079</b><b class="c" style="top:360.20px;left:924.50px">3.69590</b><b class="c" style="top:360.20px;left:968.75px">3.60478</b><b class="c" style="top:360.20px;left:1013.00px">2.99061</b><b class="c" style="top:387.50px;left:104.50px">6</b><b class="c" style="top:387.50px;left:157.50px">5.79548</b><b class="c" style="top:387.50px;left:210.00px">5.69719</b><b class="c" style="top:387.50px;left:259.50px">5.60143</b><b class="c" style="top:387.50px;left:313.00px">5.50813</b><b class="c" style="top:387.50px;left:364.50px">5.41719</b><b class="c" style="top:387.50px;left:417.00px">5.32855</b><b class="c" style="top:387.50px;left:468.75px">5.24214</b><b class="c" style="top:387.50px;left:519.50px">5.15787</b><b class="c" style="top:387.50px;left:573.00px">5.07569</b><b class="c" style="top:387.50px;left:624.50px">4.99553</b><b class="c" style="top:387.50px;left:673.75px">4.91732</b><b class="c" style="top:387.50px;left:728.75px">4.76654</b><b class="c" style="top:387.50px;left:779.50px">4.62288</b><b class="c" style="top:387.50px;left:832.75px">4.48592</b><b class="c" style="top:387.50px;left:878.25px">4.35526</b><b class="c" style="top:387.50px;left:924.50px">4.23054</b><b class="c" style="top:387.50px;left:968.75px">4.11141</b><b class="c" style="top:387.50px;left:1013.00px">3.32551</b><b class="c" style="top:404.30px;left:104.50px">7</b><b class="c" style="top:404.30px;left:157.50px">6.72819</b><b class="c" style="top:404.30px;left:210.00px">6.59821</b><b class="c" style="top:404.30px;left:259.50px">6.47199</b><b class="c" style="top:404.30px;left:313.00px">6.34939</b><b class="c" style="top:404.30px;left:364.50px">6.23028</b><b class="c" style="top:404.30px;left:417.00px">6.11454</b><b class="c" style="top:404.30px;left:468.75px">6.00205</b><b class="c" style="top:404.30px;left:519.50px">5.89270</b><b class="c" style="top:404.30px;left:573.00px">5.78637</b><b class="c" style="top:404.30px;left:624.50px">5.68297</b><b class="c" style="top:404.30px;left:673.75px">5.58238</b><b class="c" style="top:404.30px;left:728.75px">5.38929</b><b class="c" style="top:404.30px;left:779.50px">5.20637</b><b class="c" style="top:404.30px;left:832.75px">5.03295</b><b class="c" style="top:404.30px;left:878.25px">4.86842</b><b class="c" style="top:404.30px;left:924.50px">4.71220</b><b class="c" style="top:404.30px;left:968.75px">4.56376</b><b class="c" style="top:404.30px;left:1013.00px">3.60459</b><b class="c" style="top:421.10px;left:104.50px">8</b><b class="c" style="top:421.10px;left:157.50px">7.65168</b><b class="c" style="top:421.10px;left:210.00px">7.48593</b><b class="c" style="top:421.10px;left:259.50px">7.32548</b><b class="c" style="top:421.10px;left:313.00px">7.17014</b><b class="c" style="top:421.10px;left:364.50px">7.01969</b><b class="c" style="top:421.10px;left:417.00px">6.87396</b><b class="c" style="top:421.10px;left:468.75px">6.73274</b><b class="c" style="top:421.10px;left:519.50px">6.59589</b><b class="c" style="top:421.10px;left:573.00px">6.46321</b><b class="c" style="top:421.10px;left:624.50px">6.33457</b><b class="c" style="top:421.10px;left:673.75px">6.20979</b><b class="c" style="top:421.10px;left:728.75px">5.97130</b><b class="c" style="top:421.10px;left:779.50px">5.74664</b><b class="c" style="top:421.10px;left:832.75px">5.53482</b><b class="c" style="top:421.10px;left:878.25px">5.33493</b><b class="c" style="top:421.10px;left:924.50px">5.14612</b><b class="c" style="top:421.10px;left:968.75px">4.96764</b><b class="c" style="top:421.10px;left:1013.00px">3.83716</b><b class="c" style="top:437.90px;left:104.50px">9</b><b class="c" style="top:437.90px;left:157.50px">8.56602</b><b class="c" style="top:437.90px;left:210.00px">8.36052</b><b class="c" style="top:437.90px;left:259.50px">8.16224</b><b class="c" style="top:437.90px;left:313.00px">7.97087</b><b class="c" style="top:437.90px;left:364.50px">7.78611</b><b class="c" style="top:437.90px;left:417.00px">7.60769</b><b class="c" style="top:437.90px;left:468.75px">7.43533</b><b class="c" style="top:437.90px;left:519.50px">7.26879</b><b class="c" style="top:437.90px;left:573.00px">7.10782</b><b class="c" style="top:437.90px;left:624.50px">6.95220</b><b class="c" style="top:437.90px;left:673.75px">6.80169</b><b class="c" style="top:437.90px;left:728.75px">6.51523</b><b class="c" style="top:437.90px;left:779.50px">6.24689</b><b class="c" style="top:437.90px;left:832.75px">5.99525</b><b class="c" style="top:437.90px;left:878.25px">5.75902</b><b class="c" style="top:437.90px;left:924.50px">5.53705</b><b class="c" style="top:437.90px;left:968.75px">5.32825</b><b class="c" style="top:437.90px;left:1013.00px">4.03097</b><b class="c" style="top:454.70px;left:104.50px">10</b><b class="c" style="top:454.70px;left:157.50px">9.47130</b><b class="c" style="top:454.70px;left:210.00px">9.22218</b><b class="c" style="top:454.70px;left:259.50px">8.98259</b><b class="c" style="top:454.70px;left:313.00px">8.75206</b><b class="c" style="top:454.70px;left:364.50px">8.53020</b><b class="c" style="top:454.70px;left:417.00px">8.31661</b><b class="c" style="top:454.70px;left:468.75px">8.11090</b><b class="c" style="top:454.70px;left:519.50px">7.91272</b><b class="c" style="top:454.70px;left:573.00px">7.72173</b><b class="c" style="top:454.70px;left:624.50px">7.53763</b><b class="c" style="top:454.70px;left:673.75px">7.36009</b><b class="c" style="top:454.70px;left:728.75px">7.02358</b><b class="c" style="top:454.70px;left:779.50px">6.71008</b><b class="c" style="top:454.70px;left:832.75px">6.41766</b><b class="c" style="top:454.70px;left:878.25px">6.14457</b><b class="c" style="top:454.70px;left:924.50px">5.88923</b><b class="c" style="top:454.70px;left:968.75px">5.65022</b><b class="c" style="top:454.70px;left:1013.00px">4.19247</b><b class="c" style="top:482.00px;left:104.50px">11</b><b class="c" style="top:482.00px;left:157.50px">10.36763</b><b class="c" style="top:482.00px;left:210.00px">10.07112</b><b class="c" style="top:482.00px;left:259.50px">9.78685</b><b class="c" style="top:482.00px;left:313.00px">9.51421</b><b class="c" style="top:482.00px;left:364.50px">9.25262</b><b class="c" style="top:482.00px;left:417.00px">9.00155</b><b class="c" style="top:482.00px;left:468.75px">8.76048</b><b class="c" style="top:482.00px;left:519.50px">8.52892</b><b class="c" style="top:482.00px;left:573.00px">8.30641</b><b class="c" style="top:482.00px;left:624.50px">8.09254</b><b class="c" style="top:482.00px;left:673.75px">7.88687</b><b class="c" style="top:482.00px;left:728.75px">7.49867</b><b class="c" style="top:482.00px;left:779.50px">7.13896</b><b class="c" style="top:482.00px;left:832.75px">6.80519</b><b class="c" style="top:482.00px;left:878.25px">6.49506</b><b class="c" style="top:482.00px;left:924.50px">6.20652</b><b class="c" style="top:482.00px;left:968.75px">5.93770</b><b class="c" style="top:482.00px;left:1013.00px">4.32706</b><b class="c" style="top:498.80px;left:104.50px">12</b><b class="c" style="top:498.80px;left:157.50px">11.25508</b><b class="c" style="top:498.80px;left:210.00px">10.90751</b><b class="c" style="top:498.80px;left:259.50px">10.57534</b><b class="c" style="top:498.80px;left:313.00px">10.25776</b><b class="c" style="top:498.80px;left:364.50px">9.95400</b><b class="c" style="top:498.80px;left:417.00px">9.66333</b><b class="c" style="top:498.80px;left:468.75px">9.38507</b><b class="c" style="top:498.80px;left:519.50px">9.11858</b><b class="c" style="top:498.80px;left:573.00px">8.86325</b><b class="c" style="top:498.80px;left:624.50px">8.61852</b><b class="c" style="top:498.80px;left:673.75px">8.38384</b><b class="c" style="top:498.80px;left:728.75px">7.94269</b><b class="c" style="top:498.80px;left:779.50px">7.53608</b><b class="c" style="top:498.80px;left:832.75px">7.16073</b><b class="c" style="top:498.80px;left:878.25px">6.81369</b><b class="c" style="top:498.80px;left:924.50px">6.49236</b><b class="c" style="top:498.80px;left:968.75px">6.19437</b><b class="c" style="top:498.80px;left:1013.00px">4.43922</b><b class="c" style="top:515.60px;left:104.50px">13</b><b class="c" style="top:515.60px;left:157.50px">12.13374</b><b class="c" style="top:515.60px;left:210.00px">11.73153</b><b class="c" style="top:515.60px;left:259.50px">11.34837</b><b class="c" style="top:515.60px;left:313.00px">10.98319</b><b class="c" style="top:515.60px;left:364.50px">10.63496</b><b class="c" style="top:515.60px;left:417.00px">10.30274</b><b class="c" style="top:515.60px;left:468.75px">9.98565</b><b class="c" style="top:515.60px;left:519.50px">9.68285</b><b class="c" style="top:515.60px;left:573.00px">9.39357</b><b class="c" style="top:515.60px;left:624.50px">9.11708</b><b class="c" style="top:515.60px;left:673.75px">8.85268</b><b class="c" style="top:515.60px;left:728.75px">8.35765</b><b class="c" style="top:515.60px;left:779.50px">7.90378</b><b class="c" style="top:515.60px;left:832.75px">7.48690</b><b class="c" style="top:515.60px;left:878.25px">7.10336</b><b class="c" style="top:515.60px;left:924.50px">6.74987</b><b class="c" style="top:515.60px;left:968.75px">6.42355</b><b class="c" style="top:515.60px;left:1013.00px">4.53268</b><b class="c" style="top:532.40px;left:104.50px">14</b><b class="c" style="top:532.40px;left:157.50px">13.00370</b><b class="c" style="top:532.40px;left:210.00px">12.54338</b><b class="c" style="top:532.40px;left:259.50px">12.10625</b><b class="c" style="top:532.40px;left:313.00px">11.69091</b><b class="c" style="top:532.40px;left:364.50px">11.29607</b><b class="c" style="top:532.40px;left:417.00px">10.92052</b><b class="c" style="top:532.40px;left:468.75px">10.56312</b><b class="c" style="top:532.40px;left:519.50px">10.22283</b><b class="c" style="top:532.40px;left:573.00px">9.89864</b><b class="c" style="top:532.40px;left:624.50px">9.58965</b><b class="c" style="top:532.40px;left:673.75px">9.29498</b><b class="c" style="top:532.40px;left:728.75px">8.74547</b><b class="c" style="top:532.40px;left:779.50px">8.24424</b><b class="c" style="top:532.40px;left:832.75px">7.78615</b><b class="c" style="top:532.40px;left:878.25px">7.36669</b><b class="c" style="top:532.40px;left:924.50px">6.98187</b><b class="c" style="top:532.40px;left:968.75px">6.62817</b><b class="c" style="top:532.40px;left:1013.00px">4.61057</b><b class="c" style="top:549.20px;left:104.50px">15</b><b class="c" style="top:549.20px;left:157.50px">13.86505</b><b class="c" style="top:549.20px;left:210.00px">13.34323</b><b class="c" style="top:549.20px;left:259.50px">12.84926</b><b class="c" style="top:549.20px;left:313.00px">12.38138</b><b class="c" style="top:549.20px;left:364.50px">11.93794</b><b class="c" style="top:549.20px;left:417.00px">11.51741</b><b class="c" style="top:549.20px;left:468.75px">11.11839</b><b class="c" style="top:549.20px;left:519.50px">10.73955</b><b class="c" style="top:549.20px;left:573.00px">10.37966</b><b class="c" style="top:549.20px;left:624.50px">10.03758</b><b class="c" style="top:549.20px;left:673.75px">9.71225</b><b class="c" style="top:549.20px;left:728.75px">9.10791</b><b class="c" style="top:549.20px;left:779.50px">8.55948</b><b class="c" style="top:549.20px;left:832.75px">8.06069</b><b class="c" style="top:549.20px;left:878.25px">7.60608</b><b class="c" style="top:549.20px;left:924.50px">7.19087</b><b class="c" style="top:549.20px;left:968.75px">6.81086</b><b class="c" style="top:549.20px;left:1013.00px">4.67547</b><b class="c" style="top:576.50px;left:104.50px">16</b><b class="c" style="top:576.50px;left:157.50px">14.71787</b><b class="c" style="top:576.50px;left:210.00px">14.13126</b><b class="c" style="top:576.50px;left:259.50px">13.57771</b><b class="c" style="top:576.50px;left:313.00px">13.05500</b><b class="c" style="top:576.50px;left:364.50px">12.56110</b><b class="c" style="top:576.50px;left:417.00px">12.09412</b><b class="c" style="top:576.50px;left:468.75px">11.65230</b><b class="c" style="top:576.50px;left:519.50px">11.23402</b><b class="c" style="top:576.50px;left:573.00px">10.83777</b><b class="c" style="top:576.50px;left:624.50px">10.46216</b><b class="c" style="top:576.50px;left:673.75px">10.10590</b><b class="c" style="top:576.50px;left:728.75px">9.44665</b><b class="c" style="top:576.50px;left:779.50px">8.85137</b><b class="c" style="top:576.50px;left:832.75px">8.31256</b><b class="c" style="top:576.50px;left:878.25px">7.82371</b><b class="c" style="top:576.50px;left:924.50px">7.37916</b><b class="c" style="top:576.50px;left:968.75px">6.97399</b><b class="c" style="top:576.50px;left:1013.00px">4.72956</b><b class="c" style="top:593.30px;left:104.50px">17</b><b class="c" style="top:593.30px;left:157.50px">15.56225</b><b class="c" style="top:593.30px;left:210.00px">14.90765</b><b class="c" style="top:593.30px;left:259.50px">14.29187</b><b class="c" style="top:593.30px;left:313.00px">13.71220</b><b class="c" style="top:593.30px;left:364.50px">13.16612</b><b class="c" style="top:593.30px;left:417.00px">12.65132</b><b class="c" style="top:593.30px;left:468.75px">12.16567</b><b class="c" style="top:593.30px;left:519.50px">11.70719</b><b class="c" style="top:593.30px;left:573.00px">11.27407</b><b class="c" style="top:593.30px;left:624.50px">10.86461</b><b class="c" style="top:593.30px;left:673.75px">10.47726</b><b class="c" style="top:593.30px;left:728.75px">9.76322</b><b class="c" style="top:593.30px;left:779.50px">9.12164</b><b class="c" style="top:593.30px;left:832.75px">8.54363</b><b class="c" style="top:593.30px;left:878.25px">8.02155</b><b class="c" style="top:593.30px;left:924.50px">7.54879</b><b class="c" style="top:593.30px;left:968.75px">7.11963</b><b class="c" style="top:593.30px;left:1013.00px">4.77463</b><b class="c" style="top:610.10px;left:104.50px">18</b><b class="c" style="top:610.10px;left:157.50px">16.39827</b><b class="c" style="top:610.10px;left:210.00px">15.67256</b><b class="c" style="top:610.10px;left:259.50px">14.99203</b><b class="c" style="top:610.10px;left:313.00px">14.35336</b><b class="c" style="top:610.10px;left:364.50px">13.75351</b><b class="c" style="top:610.10px;left:417.00px">13.18968</b><b class="c" style="top:610.10px;left:468.75px">12.65930</b><b class="c" style="top:610.10px;left:519.50px">12.15999</b><b class="c" style="top:610.10px;left:573.00px">11.68959</b><b class="c" style="top:610.10px;left:624.50px">11.24607</b><b class="c" style="top:610.10px;left:673.75px">10.82760</b><b class="c" style="top:610.10px;left:728.75px">10.05909</b><b class="c" style="top:610.10px;left:779.50px">9.37189</b><b class="c" style="top:610.10px;left:832.75px">8.75563</b><b class="c" style="top:610.10px;left:878.25px">8.20141</b><b class="c" style="top:610.10px;left:924.50px">7.70162</b><b class="c" style="top:610.10px;left:968.75px">7.24967</b><b class="c" style="top:610.10px;left:1013.00px">4.81219</b><b class="c" style="top:626.90px;left:104.50px">19</b><b class="c" style="top:626.90px;left:157.50px">17.22601</b><b class="c" style="top:626.90px;left:210.00px">16.42617</b><b class="c" style="top:626.90px;left:259.50px">15.67846</b><b class="c" style="top:626.90px;left:313.00px">14.97889</b><b class="c" style="top:626.90px;left:364.50px">14.32380</b><b class="c" style="top:626.90px;left:417.00px">13.70984</b><b class="c" style="top:626.90px;left:468.75px">13.13394</b><b class="c" style="top:626.90px;left:519.50px">12.59329</b><b class="c" style="top:626.90px;left:573.00px">12.08532</b><b class="c" style="top:626.90px;left:624.50px">11.60765</b><b class="c" style="top:626.90px;left:673.75px">11.15812</b><b class="c" style="top:626.90px;left:728.75px">10.33560</b><b class="c" style="top:626.90px;left:779.50px">9.60360</b><b class="c" style="top:626.90px;left:832.75px">8.95011</b><b class="c" style="top:626.90px;left:878.25px">8.36492</b><b class="c" style="top:626.90px;left:924.50px">7.83929</b><b class="c" style="top:626.90px;left:968.75px">7.36578</b><b class="c" style="top:626.90px;left:1013.00px">4.84350</b><b class="c" style="top:643.70px;left:104.50px">20</b><b class="c" style="top:643.70px;left:157.50px">18.04555</b><b class="c" style="top:643.70px;left:210.00px">17.16864</b><b class="c" style="top:643.70px;left:259.50px">16.35143</b><b class="c" style="top:643.70px;left:313.00px">15.58916</b><b class="c" style="top:643.70px;left:364.50px">14.87747</b><b class="c" style="top:643.70px;left:417.00px">14.21240</b><b class="c" style="top:643.70px;left:468.75px">13.59033</b><b class="c" style="top:643.70px;left:519.50px">13.00794</b><b class="c" style="top:643.70px;left:573.00px">12.46221</b><b class="c" style="top:643.70px;left:624.50px">11.95038</b><b class="c" style="top:643.70px;left:673.75px">11.46992</b><b class="c" style="top:643.70px;left:728.75px">10.59401</b><b class="c" style="top:643.70px;left:779.50px">9.81815</b><b class="c" style="top:643.70px;left:832.75px">9.12855</b><b class="c" style="top:643.70px;left:878.25px">8.51356</b><b class="c" style="top:643.70px;left:924.50px">7.96333</b><b class="c" style="top:643.70px;left:968.75px">7.46944</b><b class="c" style="top:643.70px;left:1013.00px">4.86958</b><b class="c" style="top:671.00px;left:104.50px">21</b><b class="c" style="top:671.00px;left:157.50px">18.85698</b><b class="c" style="top:671.00px;left:210.00px">17.90014</b><b class="c" style="top:671.00px;left:259.50px">17.01121</b><b class="c" style="top:671.00px;left:313.00px">16.18455</b><b class="c" style="top:671.00px;left:364.50px">15.41502</b><b class="c" style="top:671.00px;left:417.00px">14.69797</b><b class="c" style="top:671.00px;left:468.75px">14.02916</b><b class="c" style="top:671.00px;left:519.50px">13.40472</b><b class="c" style="top:671.00px;left:573.00px">12.82115</b><b class="c" style="top:671.00px;left:624.50px">12.27524</b><b class="c" style="top:671.00px;left:673.75px">11.76408</b><b class="c" style="top:671.00px;left:728.75px">10.83553</b><b class="c" style="top:671.00px;left:779.50px">10.01680</b><b class="c" style="top:671.00px;left:832.75px">9.29224</b><b class="c" style="top:671.00px;left:878.25px">8.64869</b><b class="c" style="top:671.00px;left:924.50px">8.07507</b><b class="c" style="top:671.00px;left:968.75px">7.56200</b><b class="c" style="top:671.00px;left:1013.00px">4.89132</b><b class="c" style="top:687.80px;left:104.50px">25</b><b class="c" style="top:687.80px;left:157.50px">22.02316</b><b class="c" style="top:687.80px;left:210.00px">20.71961</b><b class="c" style="top:687.80px;left:259.50px">19.52346</b><b class="c" style="top:687.80px;left:313.00px">18.42438</b><b class="c" style="top:687.80px;left:364.50px">17.41315</b><b class="c" style="top:687.80px;left:417.00px">16.48151</b><b class="c" style="top:687.80px;left:468.75px">15.62208</b><b class="c" style="top:687.80px;left:519.50px">14.82821</b><b class="c" style="top:687.80px;left:573.00px">14.09394</b><b class="c" style="top:687.80px;left:624.50px">13.41393</b><b class="c" style="top:687.80px;left:673.75px">12.78336</b><b class="c" style="top:687.80px;left:728.75px">11.65358</b><b class="c" style="top:687.80px;left:779.50px">10.67478</b><b class="c" style="top:687.80px;left:832.75px">9.82258</b><b class="c" style="top:687.80px;left:878.25px">9.07704</b><b class="c" style="top:687.80px;left:924.50px">8.42174</b><b class="c" style="top:687.80px;left:968.75px">7.84314</b><b class="c" style="top:687.80px;left:1013.00px">4.94759</b><b class="c" style="top:704.60px;left:104.50px">30</b><b class="c" style="top:704.60px;left:157.50px">25.80771</b><b class="c" style="top:704.60px;left:210.00px">24.01584</b><b class="c" style="top:704.60px;left:259.50px">22.39646</b><b class="c" style="top:704.60px;left:313.00px">20.93029</b><b class="c" style="top:704.60px;left:364.50px">19.60044</b><b class="c" style="top:704.60px;left:417.00px">18.39205</b><b class="c" style="top:704.60px;left:468.75px">17.29203</b><b class="c" style="top:704.60px;left:519.50px">16.28889</b><b class="c" style="top:704.60px;left:573.00px">15.37245</b><b class="c" style="top:704.60px;left:624.50px">14.53375</b><b class="c" style="top:704.60px;left:673.75px">13.76483</b><b class="c" style="top:704.60px;left:728.75px">12.40904</b><b class="c" style="top:704.60px;left:779.50px">11.25778</b><b class="c" style="top:704.60px;left:832.75px">10.27365</b><b class="c" style="top:704.60px;left:878.25px">9.42691</b><b class="c" style="top:704.60px;left:924.50px">8.69379</b><b class="c" style="top:704.60px;left:968.75px">8.05518</b><b class="c" style="top:704.60px;left:1013.00px">4.97894</b><b class="c" style="top:721.40px;left:104.50px">40</b><b class="c" style="top:721.40px;left:157.50px">32.83469</b><b class="c" style="top:721.40px;left:210.00px">29.91585</b><b class="c" style="top:721.40px;left:259.50px">27.35548</b><b class="c" style="top:721.40px;left:313.00px">25.10278</b><b class="c" style="top:721.40px;left:364.50px">23.11477</b><b class="c" style="top:721.40px;left:417.00px">21.35507</b><b class="c" style="top:721.40px;left:468.75px">19.79277</b><b class="c" style="top:721.40px;left:519.50px">18.40158</b><b class="c" style="top:721.40px;left:573.00px">17.15909</b><b class="c" style="top:721.40px;left:624.50px">16.04612</b><b class="c" style="top:721.40px;left:673.75px">15.04630</b><b class="c" style="top:721.40px;left:728.75px">13.33171</b><b class="c" style="top:721.40px;left:779.50px">11.92461</b><b class="c" style="top:721.40px;left:832.75px">10.75736</b><b class="c" style="top:721.40px;left:878.25px">9.77905</b><b class="c" style="top:721.40px;left:924.50px">8.95105</b><b class="c" style="top:721.40px;left:968.75px">8.24378</b><b class="c" style="top:721.40px;left:1013.00px">4.99660</b>
</div></body></html>
